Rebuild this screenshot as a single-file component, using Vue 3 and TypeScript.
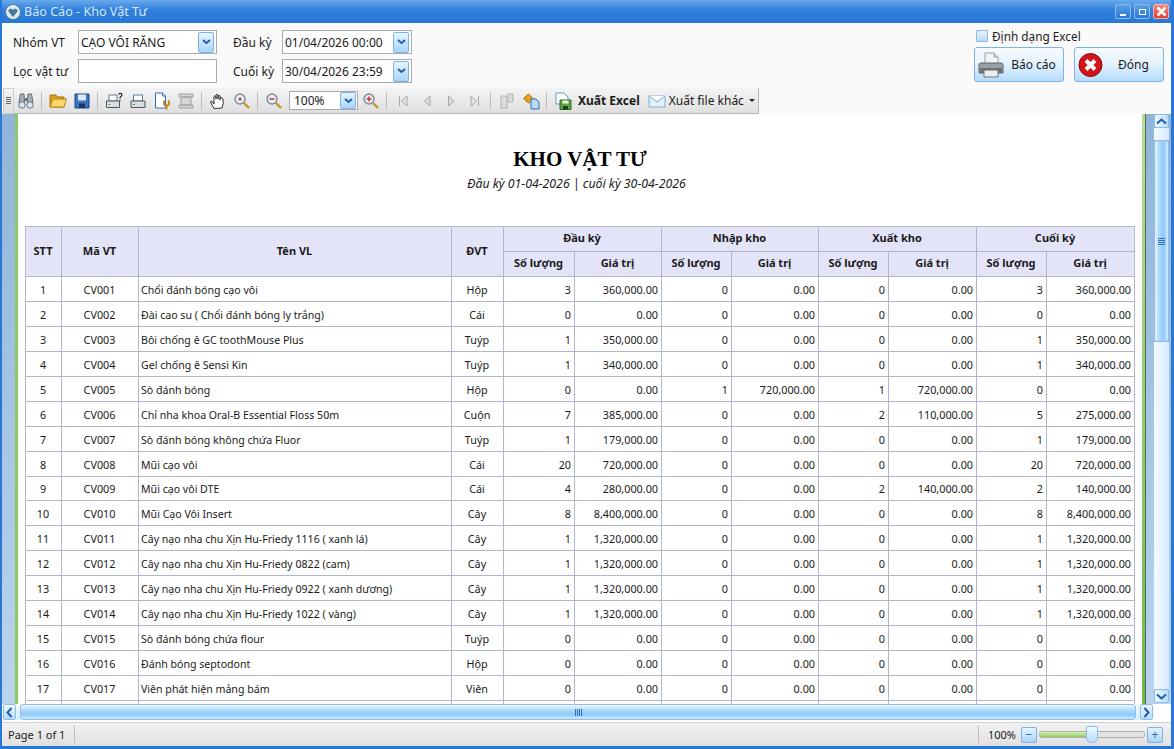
<template>
  <div class="window">
    <header class="titlebar">
      <svg class="app-icon" width="16" height="16" viewBox="0 0 16 16">
        <circle cx="8" cy="8" r="7.5" fill="#dfe9ee" stroke="#4c7f9c" />
        <path d="M8 13 3.5 7.5C3 5 6.5 3.6 8 6c1.5-2.4 5-1 4.5 1.5z" fill="#3f7a92" />
      </svg>
      <span class="title-text">Báo Cáo - Kho Vật Tư</span>
      <div class="win-buttons">
        <button class="win-btn"><span class="glyph-min"></span></button>
        <button class="win-btn"><span class="glyph-max"></span></button>
        <button class="win-btn close">
          <svg width="11" height="11" viewBox="0 0 11 11"><path d="M1.5 1.5l8 8M9.5 1.5l-8 8" stroke="#fff" stroke-width="2.6" /></svg>
        </button>
      </div>
    </header>

    <section class="filters">
      <div class="filter-grid">
        <label class="lbl">Nhóm VT</label>
        <div class="field wide">
          <span>CẠO VÔI RĂNG</span>
          <span class="drop"><svg width="9" height="6" viewBox="0 0 9 6"><path d="M1 1l3.5 3L8 1" fill="none" stroke="#1c5fb0" stroke-width="2" /></svg></span>
        </div>
        <label class="lbl lbl2">Đầu kỳ</label>
        <div class="field date">
          <span>01/04/2026 00:00</span>
          <span class="drop"><svg width="9" height="6" viewBox="0 0 9 6"><path d="M1 1l3.5 3L8 1" fill="none" stroke="#1c5fb0" stroke-width="2" /></svg></span>
        </div>
        <label class="lbl">Lọc vật tư</label>
        <div class="field wide"></div>
        <label class="lbl lbl2">Cuối kỳ</label>
        <div class="field date">
          <span>30/04/2026 23:59</span>
          <span class="drop"><svg width="9" height="6" viewBox="0 0 9 6"><path d="M1 1l3.5 3L8 1" fill="none" stroke="#1c5fb0" stroke-width="2" /></svg></span>
        </div>
      </div>
      <div class="actions">
        <label class="check"><span class="box"></span>Định dạng Excel</label>
        <div class="action-row">
          <button class="big-btn">
            <svg width="26" height="26" viewBox="0 0 26 26">
              <path d="M7 1h9l4 4v9H7z" fill="#f4f5f6" stroke="#9aa0a6" />
              <path d="M16 1v4h4" fill="#d5d8dc" stroke="#9aa0a6" />
              <path d="M3 11h20q2 0 2 2v8H1v-8q0-2 2-2z" fill="#9a9fa6" stroke="#5e646b" />
              <path d="M2 16h22v5H2z" fill="#6d7279" />
              <path d="M6 18h14v7H6z" fill="#eceef0" stroke="#6d7278" />
            </svg>
            <span>Báo cáo</span>
          </button>
          <button class="big-btn">
            <svg width="26" height="26" viewBox="0 0 26 26">
              <circle cx="12.5" cy="13" r="11.5" fill="#d3141a" stroke="#8a0d10" />
              <path d="M8 8.5l9 9M17 8.5l-9 9" stroke="#fff" stroke-width="4" />
            </svg>
            <span>Đóng</span>
          </button>
        </div>
      </div>
    </section>

    <nav class="toolbar">
      <span class="grip"></span>
      <svg class="ti" viewBox="0 0 18 18"><path d="M3.5 2h3.5l.5 9H2zM11 2h3.5l1.500 9h-5.500z" fill="#aab2ba" stroke="#5e6872" /><path d="M7.5 6h3v3h-3z" fill="#6d7680" /><circle cx="5" cy="13" r="3.2" fill="#d6e6f4" stroke="#6a7681" /><circle cx="13" cy="13" r="3.2" fill="#d6e6f4" stroke="#6a7681" /></svg>
      <i class="sep"></i>
      <svg class="ti" viewBox="0 0 18 18"><path d="M1 3h6l1 2h7v10H1z" fill="#d9a020" stroke="#a8730e" /><path d="M4 7h13.5L15 15H1z" fill="#f9d968" stroke="#b98615" /></svg>
      <svg class="ti" viewBox="0 0 18 18"><path d="M2 2h14v14H2z" fill="#3b73c4" stroke="#1f4684" /><path d="M5 2.5h8v6H5z" fill="#dbe7f5" /><path d="M6 11.5h6V16H6z" fill="#20375c" /></svg>
      <i class="sep"></i>
      <svg class="ti" viewBox="0 0 18 18"><path d="M4 3h8v6H4z" fill="#fff" stroke="#5b7a9c" /><path d="M1.5 9h13v6.5h-13z" fill="#d9dee3" stroke="#4d5760" /><path d="M3.5 12.500h2" stroke="#4a9b4a" /><path d="M13.500 2.500q1-1.500 2.500-1t.5 2.500l-1.500 1.500v1M15 8v1" fill="none" stroke="#222" stroke-width="1.2" /></svg>
      <svg class="ti" viewBox="0 0 18 18"><path d="M4.500 3h9v6h-9z" fill="#fff" stroke="#5b7a9c" /><path d="M2 9h14v6.500H2z" fill="#d9dee3" stroke="#4d5760" /><path d="M4 12.500h2" stroke="#4a9b4a" /></svg>
      <svg class="ti" viewBox="0 0 18 18"><path d="M2.500 1h7l3 3v12h-10z" fill="#fff" stroke="#2a6fc0" /><path d="M9.500 1v3h3" fill="#cfe3f7" stroke="#2a6fc0" /><path d="M11 8.500V11a2.500 2.500 0 0 0 5 0V8.500M13.500 13v4.500" fill="none" stroke="#c68a18" stroke-width="2" /></svg>
      <svg class="ti" viewBox="0 0 18 18"><path d="M2 2h14v3H2zM4 5h10v8H4zM2 13h14v3H2z" fill="#d6d6d6" stroke="#a0a0a0" /></svg>
      <i class="sep"></i>
      <svg class="ti" viewBox="0 0 18 18"><path d="M5 16.500 1.500 10q0-1.500 2 0L5 12V4.500q1-1.500 2 0V7 3q1-1.500 2 0v4-3q1-1.500 2 0v4-2q1-1 2 0l1 1q1 4-1 9z" fill="#fff" stroke="#333" /></svg>
      <svg class="ti" viewBox="0 0 18 18"><circle cx="7" cy="7" r="5" fill="#e6eef5" stroke="#7a8b9a" stroke-width="1.4" /><circle cx="7" cy="7" r="1.5" fill="#c33" /><path d="M11 11l5 5" stroke="#c8922b" stroke-width="2.4" /></svg>
      <i class="sep"></i>
      <svg class="ti" viewBox="0 0 18 18"><circle cx="7" cy="7" r="5" fill="#e6eef5" stroke="#7a8b9a" stroke-width="1.4" /><path d="M4.500 7h5" stroke="#c33" stroke-width="1.5" /><path d="M11 11l5 5" stroke="#c8922b" stroke-width="2.4" /></svg>
      <div class="zoom-box">
        <span>100%</span>
        <span class="drop small"><svg width="9" height="6" viewBox="0 0 9 6"><path d="M1 1l3.5 3L8 1" fill="none" stroke="#1c5fb0" stroke-width="2" /></svg></span>
      </div>
      <svg class="ti" viewBox="0 0 18 18"><circle cx="7" cy="7" r="5" fill="#e6eef5" stroke="#7a8b9a" stroke-width="1.4" /><path d="M4.500 7h5M7 4.500v5" stroke="#c33" stroke-width="1.5" /><path d="M11 11l5 5" stroke="#c8922b" stroke-width="2.4" /></svg>
      <i class="sep"></i>
      <svg class="ti" viewBox="0 0 18 18"><path d="M5.500 4v10M13 4 7.500 9l5.500 5z" fill="#e4e4e4" stroke="#a9a9a9" /></svg>
      <svg class="ti" viewBox="0 0 18 18"><path d="M12 4 6.500 9l5.500 5z" fill="#dedede" stroke="#a9a9a9" /></svg>
      <svg class="ti" viewBox="0 0 18 18"><path d="M6.500 4 12 9l-5.500 5z" fill="#dedede" stroke="#a9a9a9" /></svg>
      <svg class="ti" viewBox="0 0 18 18"><path d="M12.500 4v10M5 4l5.500 5L5 14z" fill="#e4e4e4" stroke="#a9a9a9" /></svg>
      <i class="sep"></i>
      <svg class="ti" viewBox="0 0 18 18"><path d="M3 4h6v12H3zM10 2h5v8h-5z" fill="#dcdcdc" stroke="#b0b0b0" /></svg>
      <svg class="ti" viewBox="0 0 18 18"><path d="M1.500 6.500l5-4.500 5 5-5 4z" fill="#e8a020" stroke="#a86f10" /><path d="M9 7h5l3 3v7H9z" fill="#bcd9f2" stroke="#2a6fc0" /></svg>
      <i class="sep"></i>
      <span class="export bold">
        <svg class="ti" viewBox="0 0 18 18"><path d="M2 1h8l4 4v7H2z" fill="#fff" stroke="#6b93bf" /><path d="M6 8h11v9.500H6z" fill="#5fa143" stroke="#2f6a20" /><path d="M8.500 8.500h6v3h-6z" fill="#e8f3e1" /><path d="M9 14h5v3.500H9z" fill="#20401a" /></svg>
        Xuất Excel
      </span>
      <span class="export">
        <svg class="ti" viewBox="0 0 18 18"><path d="M1 4h16v11H1z" fill="#e4f0fb" stroke="#7ab0e0" /><path d="M1 4l8 6 8-6" fill="#fff" stroke="#7ab0e0" /></svg>
        Xuất file khác
      </span>
      <i class="caret"></i>
    </nav>

    <main class="viewer">
      <div class="gutter"></div>
      <div class="page">
        <h1>KHO VẬT TƯ</h1>
        <p class="period">Đầu kỳ 01-04-2026 | cuối kỳ 30-04-2026</p>
        <table>
          <colgroup>
            <col v-for="(w, i) in colWidths" :key="i" :style="{ width: w + 'px' }" />
          </colgroup>
          <thead>
            <tr>
              <th rowspan="2">STT</th>
              <th rowspan="2">Mã VT</th>
              <th rowspan="2">Tên VL</th>
              <th rowspan="2">ĐVT</th>
              <th colspan="2" class="group">Đầu kỳ</th>
              <th colspan="2" class="group">Nhập kho</th>
              <th colspan="2" class="group">Xuất kho</th>
              <th colspan="2" class="group">Cuối kỳ</th>
            </tr>
            <tr>
              <template v-for="g in 4" :key="g">
                <th class="sub">Số lượng</th>
                <th class="sub">Giá trị</th>
              </template>
            </tr>
          </thead>
          <tbody>
            <tr v-for="(r, i) in rows" :key="r[0]">
              <td class="c">{{ i + 1 }}</td>
              <td class="c">{{ r[0] }}</td>
              <td class="name">{{ r[1] }}</td>
              <td class="c">{{ r[2] }}</td>
              <template v-for="(v, j) in r[3]" :key="j">
                <td class="n">{{ v[0] }}</td>
                <td class="n">{{ v[1] }}</td>
              </template>
            </tr>
            <tr><td v-for="k in 12" :key="k"></td></tr>
          </tbody>
        </table>
      </div>
      <div class="page-edge"></div>
      <div class="vscroll">
        <span class="sb-btn"><svg width="11" height="7" viewBox="0 0 11 7"><path d="M1 5.500l4.500-4 4.500 4" fill="none" stroke="#1c5fb0" stroke-width="2" /></svg></span>
        <span class="sb-track"></span>
        <span class="sb-thumb"><i></i></span>
        <span class="sb-track grow"></span>
        <span class="sb-btn"><svg width="11" height="7" viewBox="0 0 11 7"><path d="M1 1.500l4.500 4 4.500-4" fill="none" stroke="#1c5fb0" stroke-width="2" /></svg></span>
      </div>
    </main>

    <div class="hscroll">
      <span class="hs-btn"><svg width="7" height="11" viewBox="0 0 7 11"><path d="M5.500 1l-4 4.500 4 4.500" fill="none" stroke="#1c5fb0" stroke-width="2" /></svg></span>
      <span class="hs-cap"></span>
      <span class="hs-thumb"><i></i></span>
      <span class="hs-cap"></span>
      <span class="hs-btn"><svg width="7" height="11" viewBox="0 0 7 11"><path d="M1.500 1l4 4.500-4 4.500" fill="none" stroke="#1c5fb0" stroke-width="2" /></svg></span>
    </div>

    <footer class="statusbar">
      <span class="page-no">Page 1 of 1</span>
      <span class="status-fill"></span>
      <span class="zoom-val">100%</span>
      <span class="z-btn">−</span>
      <span class="slider"><i class="fill"></i><i class="knob"></i></span>
      <span class="z-btn">+</span>
    </footer>
  </div>
</template>

<script setup lang="ts">
type Row = [string, string, string, [string, string][]];

const colWidths = [36, 77, 313, 52, 71, 87, 70, 87, 70, 88, 70, 88];

// so luong / gia tri: dau ky, nhap, xuat, cuoi ky
const make = (code: string, name: string, unit: string, q0: number, v0: string, q1 = 0, v1 = "0.00", q2 = 0, v2 = "0.00", q3 = q0, v3 = v0): Row => [
  code,
  name,
  unit,
  [
    [String(q0), v0],
    [String(q1), v1],
    [String(q2), v2],
    [String(q3), v3],
  ],
];

const rows: Row[] = [
  make("CV001", "Chổi đánh bóng cạo vôi", "Hộp", 3, "360,000.00"),
  make("CV002", "Đài cao su ( Chổi đánh bóng ly trắng)", "Cái", 0, "0.00"),
  make("CV003", "Bôi chống ê GC toothMouse Plus", "Tuýp", 1, "350,000.00"),
  make("CV004", "Gel chống ê Sensi Kin", "Tuýp", 1, "340,000.00"),
  make("CV005", "Sò đánh bóng", "Hộp", 0, "0.00", 1, "720,000.00", 1, "720,000.00", 0, "0.00"),
  make("CV006", "Chỉ nha khoa Oral-B Essential Floss 50m", "Cuộn", 7, "385,000.00", 0, "0.00", 2, "110,000.00", 5, "275,000.00"),
  make("CV007", "Sò đánh bóng không chứa Fluor", "Tuýp", 1, "179,000.00"),
  make("CV008", "Mũi cạo vôi", "Cái", 20, "720,000.00"),
  make("CV009", "Mũi cạo vôi DTE", "Cái", 4, "280,000.00", 0, "0.00", 2, "140,000.00", 2, "140,000.00"),
  make("CV010", "Mũi Cạo Vôi Insert", "Cây", 8, "8,400,000.00"),
  make("CV011", "Cây nạo nha chu Xịn Hu-Friedy 1116 ( xanh lá)", "Cây", 1, "1,320,000.00"),
  make("CV012", "Cây nạo nha chu Xịn Hu-Friedy 0822 (cam)", "Cây", 1, "1,320,000.00"),
  make("CV013", "Cây nạo nha chu Xịn Hu-Friedy 0922 ( xanh dương)", "Cây", 1, "1,320,000.00"),
  make("CV014", "Cây nạo nha chu Xịn Hu-Friedy 1022 ( vàng)", "Cây", 1, "1,320,000.00"),
  make("CV015", "Sò đánh bóng chứa flour", "Tuýp", 0, "0.00"),
  make("CV016", "Đánh bóng septodont", "Hộp", 0, "0.00"),
  make("CV017", "Viên phát hiện mảng bám", "Viên", 0, "0.00"),
];
</script>

<style>
html,
body {
  margin: 0;
  height: 100%;
  overflow: hidden;
}
</style>

<style scoped>
.window {
  width: 1174px;
  height: 749px;
  box-sizing: border-box;
  display: flex;
  flex-direction: column;
  background: #fafafa;
  border: solid #2a78d6;
  border-width: 0 3px 3px 2px;
  font-family: "Noto Sans", "Liberation Sans", sans-serif;
  font-size: 12px;
  color: #1a1a1a;
  overflow: hidden;
}

.titlebar {
  height: 23px;
  flex: none;
  margin: 0 -3px 0 -2px;
  padding: 0 5px 0 5px;
  display: flex;
  align-items: center;
  gap: 3px;
  background: linear-gradient(#69aaec, #2f7fdc 45%, #2a78d6);
  color: #d4e7fb;
  font-size: 12.6px;
}

.win-buttons {
  margin-left: auto;
  display: flex;
  gap: 3px;
}

.win-btn {
  width: 16px;
  height: 15px;
  padding: 0;
  display: flex;
  align-items: center;
  justify-content: center;
  border: 1px solid #8dbcec;
  border-radius: 2px;
  background: linear-gradient(#5b9fe6, #2a78d6);
}

.win-btn.close {
  background: linear-gradient(#f58a7a, #e03c2c);
  border-color: #f0b5ac;
}

.glyph-min {
  width: 6px;
  height: 2px;
  margin-top: 7px;
  background: #fff;
}

.glyph-max {
  width: 5px;
  height: 4px;
  border: 1.5px solid #fff;
}

.filters {
  height: 65px;
  flex: none;
  display: flex;
  justify-content: space-between;
  box-sizing: border-box;
  padding: 7px 7px 0 11px;
}

.filter-grid {
  display: grid;
  grid-template-columns: 65px 139px 65px 130px;
  grid-template-rows: 24px 24px;
  row-gap: 5px;
  align-items: center;
}

.lbl2 {
  padding-left: 16px;
}

.field {
  height: 24px;
  box-sizing: border-box;
  display: flex;
  align-items: center;
  justify-content: space-between;
  border: 1px solid #ababab;
  background: #fff;
  padding: 0 2px 0 2px;
  white-space: nowrap;
}

.drop {
  width: 14px;
  height: 19px;
  display: flex;
  align-items: center;
  justify-content: center;
  border: 1px solid #7fb2e5;
  border-radius: 2px;
  background: linear-gradient(#e8f4ff, #a8d4fa);
}

.drop.small {
  height: 15px;
}

.actions {
  display: flex;
  flex-direction: column;
  width: 190px;
  margin-top: -1px;
}

.check {
  display: flex;
  align-items: center;
  gap: 4px;
  height: 13px;
  padding-left: 2px;
  margin-bottom: 5px;
  font-size: 11.8px;
}

.box {
  width: 10px;
  height: 10px;
  border: 1px solid #8fb9e2;
  border-radius: 1px;
  background: linear-gradient(#e8f3fd, #b8dbf8);
}

.action-row {
  display: flex;
  justify-content: space-between;
}

.big-btn {
  width: 90px;
  height: 35px;
  padding: 0 0 0 3px;
  display: flex;
  align-items: center;
  font: inherit;
  color: inherit;
  border: 1px solid #7fb2e5;
  border-radius: 3px;
  background: linear-gradient(#f7fbff, #e2f1fe 50%, #b5dcfb);
}

.big-btn span {
  flex: 1;
  text-align: center;
}

.toolbar {
  width: 756px;
  height: 26px;
  flex: none;
  box-sizing: border-box;
  margin-left: 1px;
  display: flex;
  align-items: center;
  background: linear-gradient(#f4f4f4, #dfdfdf);
  border-right: 1px solid #b5b5b5;
  border-bottom: 1px solid #b5b5b5;
}

.grip {
  width: 9px;
  height: 24px;
  border: 1px solid #cfcfcf;
  background: repeating-linear-gradient(#666 0 1px, transparent 1px 2px) center / 5px 7px no-repeat;
}

.ti {
  width: 18px;
  height: 18px;
  margin: 0 3px;
  flex: none;
}

.sep {
  width: 1px;
  height: 18px;
  margin: 0 4px 0 3px;
  background: #bdbdbd;
}

.zoom-box {
  width: 69px;
  height: 19px;
  box-sizing: border-box;
  margin: 0 1px 0 3px;
  display: flex;
  align-items: center;
  justify-content: space-between;
  padding: 0 1px 0 4px;
  border: 1px solid #aaa;
  background: #fff;
}

.export {
  display: flex;
  align-items: center;
  margin-right: 4px;
  white-space: nowrap;
}

.export.bold {
  font-weight: 700;
  margin-right: 5px;
}

.export.bold .ti {
  margin-right: 6px;
}

.caret {
  width: 0;
  height: 0;
  margin-left: 1px;
  border: 3px solid transparent;
  border-top-color: #222;
  border-bottom-width: 0;
}

.viewer {
  flex: 1;
  min-height: 0;
  display: flex;
  overflow: hidden;
}

.gutter {
  width: 13px;
  flex: none;
  background: linear-gradient(#8fb5d8, #b9d4ee);
  border-right: 3px solid #8cc863;
}

.page {
  flex: 1;
  min-width: 0;
  background: #fff;
  padding-top: 33px;
  padding-left: 7px;
  overflow: hidden;
}

h1 {
  margin: 0;
  width: 1110px;
  text-align: center;
  font: 700 21px/24px "Liberation Serif", serif;
  color: #000;
}

.period {
  margin: 5px 0 34px;
  width: 1103px;
  text-align: center;
  font-style: italic;
  font-size: 12.3px;
  line-height: 16px;
}

table {
  table-layout: fixed;
  width: 1110px;
  border-collapse: collapse;
  font-size: 10.8px;
}

th,
td {
  border: 1px solid #b2b6c8;
  padding: 0 3px 0 2px;
  box-sizing: border-box;
  white-space: nowrap;
  overflow: hidden;
}

th {
  background: #e3e4f8;
  font-weight: 700;
  font-size: 11px;
  text-align: center;
  height: 25px;
  padding-bottom: 2px;
}

th.group {
  padding-bottom: 4px;
}

th.sub {
  padding-bottom: 3px;
}

td {
  height: 24.94px;
  padding-top: 1px;
}

.name {
  font-size: 10.6px;
  padding-top: 2px;
}

.c {
  text-align: center;
}

.n {
  text-align: right;
}

.page-edge {
  width: 3px;
  flex: none;
  background: linear-gradient(#b5e090, #72ba42);
}

.vscroll {
  width: 26px;
  flex: none;
  display: flex;
  flex-direction: column;
  background: linear-gradient(#8fb5d8, #b9d4ee);
  border-left: 1px solid #56646f;
  padding: 0 2px 1px 8px;
  box-sizing: border-box;
}

.sb-btn {
  height: 14px;
  flex: none;
  display: flex;
  align-items: center;
  justify-content: center;
  box-sizing: border-box;
  border: 1px solid #8dbcec;
  border-radius: 2px;
  background: linear-gradient(90deg, #f0f8ff, #b8dcfb);
}

.sb-thumb {
  height: 202px;
  flex: none;
  box-sizing: border-box;
  display: flex;
  align-items: center;
  justify-content: center;
  border: 1px solid #8dbcec;
  border-radius: 3px;
  background: linear-gradient(90deg, #e8f5ff, #a2d4fb 40%, #8fcaf8 70%, #d6ecff);
}

.sb-thumb i {
  width: 7px;
  height: 7px;
  background: repeating-linear-gradient(#2a6fc0 0 1px, transparent 1px 2px);
}

.sb-track {
  height: 12px;
  flex: none;
  background: linear-gradient(90deg, #f4faff, #d6ebfd);
}

.sb-track.grow {
  flex: 1;
}

.hscroll {
  height: 18px;
  flex: none;
  box-sizing: border-box;
  display: flex;
  background: #fff;
  padding: 0 18px 2px 1px;
}

.hs-btn {
  width: 13px;
  flex: none;
  display: flex;
  align-items: center;
  justify-content: center;
  box-sizing: border-box;
  border: 1px solid #8dbcec;
  border-radius: 2px;
  background: linear-gradient(#f0f8ff, #b8dcfb);
}

.hs-cap {
  width: 4px;
  flex: none;
  background: linear-gradient(#f4faff, #d6ebfd);
}

.hs-thumb {
  flex: 1;
  display: flex;
  align-items: center;
  justify-content: center;
  border: 1px solid #8dbcec;
  border-radius: 3px;
  background: linear-gradient(#eef7ff, #a2d4fb 45%, #8fcaf8 70%, #d6ecff);
}

.hs-thumb i {
  width: 7px;
  height: 7px;
  background: repeating-linear-gradient(90deg, #2a6fc0 0 1px, transparent 1px 2px);
}

.statusbar {
  height: 24px;
  flex: none;
  display: flex;
  align-items: center;
  background: linear-gradient(#f2f2f2, #e0e0e0);
  padding: 0 8px 0 6px;
  border-top: 1px solid #d0d0d0;
  box-sizing: border-box;
}

.page-no {
  padding-right: 9px;
  border-right: 1px solid #bbb;
  font-size: 11px;
  line-height: 17px;
}

.status-fill {
  flex: 1;
}

.zoom-val {
  padding-left: 9px;
  margin-right: 5px;
  border-left: 1px solid #bbb;
  font-size: 11px;
  line-height: 17px;
}

.z-btn {
  width: 14px;
  height: 14px;
  display: flex;
  align-items: center;
  justify-content: center;
  border: 1px solid #7fb2e5;
  border-radius: 2px;
  background: linear-gradient(#e8f4ff, #a8d4fa);
  color: #2a6fc0;
  line-height: 1;
}

.slider {
  width: 104px;
  height: 5px;
  margin: 0 2px;
  position: relative;
  border: 1px solid #b0b0b0;
  border-radius: 3px;
  background: #e2e2e2;
}

.fill {
  display: block;
  width: 46px;
  height: 100%;
  background: linear-gradient(#d5f0b8, #8ccc5c);
}

.knob {
  position: absolute;
  left: 46px;
  top: -6px;
  width: 10px;
  height: 15px;
  border: 1px solid #8dbcec;
  border-radius: 2px 2px 5px 5px;
  background: linear-gradient(#eef7ff, #b5dcfb);
}
</style>
